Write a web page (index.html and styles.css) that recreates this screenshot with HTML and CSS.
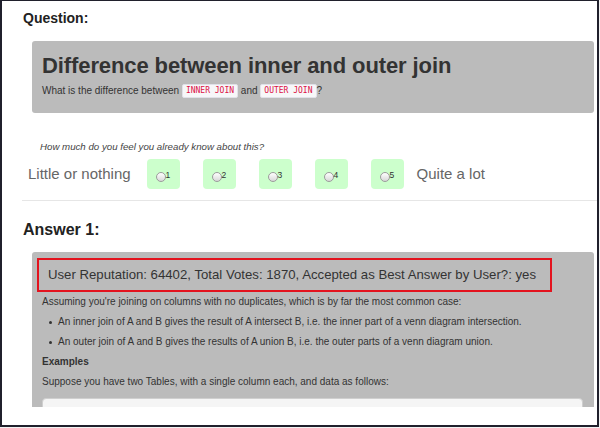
FILE: index.html
```html
<!DOCTYPE html>
<html>
<head>
<meta charset="utf-8">
<link rel="stylesheet" href="styles.css">
</head>
<body>
<div class="frame">
  <div class="content">
    <h3 class="q-label">Question:</h3>
    <div class="well question">
      <h1 class="title">Difference between inner and outer join</h1>
      <p class="sub">What is the difference between <code>INNER JOIN</code> and <code>OUTER JOIN</code>?</p>
    </div>
    <p class="prompt">How much do you feel you already know about this?</p>
    <div class="scale">
      <span class="end end-left">Little or nothing</span>
      <label class="opt"><span class="radio"></span><span class="num">1</span></label>
      <label class="opt"><span class="radio"></span><span class="num">2</span></label>
      <label class="opt"><span class="radio"></span><span class="num">3</span></label>
      <label class="opt"><span class="radio"></span><span class="num">4</span></label>
      <label class="opt"><span class="radio"></span><span class="num">5</span></label>
      <span class="end end-right">Quite a lot</span>
    </div>
    <hr class="rule">
    <h2 class="a-label">Answer 1:</h2>
    <div class="well answer">
      <div class="meta">User Reputation: 64402, Total Votes: 1870, Accepted as Best Answer by User?: yes</div>
      <p class="txt">Assuming you're joining on columns with no duplicates, which is by far the most common case:</p>
      <ul class="list">
        <li>An inner join of A and B gives the result of A intersect B, i.e. the inner part of a venn diagram intersection.</li>
        <li>An outer join of A and B gives the results of A union B, i.e. the outer parts of a venn diagram union.</li>
      </ul>
      <p class="txt bold">Examples</p>
      <p class="txt">Suppose you have two Tables, with a single column each, and data as follows:</p>
      <pre class="pre"> </pre>
    </div>
  </div>
</div>
</body>
</html>
```

FILE: styles.css
```css
html, body {
  margin: 0;
  padding: 0;
  background: #f2f2f2;
}
body {
  font-family: "Liberation Sans", Arial, Helvetica, sans-serif;
  color: #333;
}
.frame {
  width: 599px;
  height: 427px;
  box-sizing: border-box;
  border-style: solid;
  border-color: #20202c;
  border-width: 1px 2px 2px 2px;
  background: #fff;
}
.content {
  height: 406px;
  overflow: hidden;
  padding-left: 20px;
}
.q-label {
  margin: 9px 0 0 1px;
  font-size: 14px;
  line-height: 16px;
  font-weight: bold;
  color: #222;
}
.well {
  background: #bbbbbb;
  border-radius: 3px;
  margin-left: 10px;
  margin-right: 3px;
}
.question {
  margin-top: 15px;
  height: 72px;
  box-sizing: border-box;
  padding: 12px 10px 0 10px;
}
.title {
  margin: 0;
  font-size: 22px;
  line-height: 26px;
  font-weight: bold;
  color: #333;
  letter-spacing: -0.1px;
}
.sub {
  margin: 4px 0 0 0;
  font-size: 10px;
  line-height: 16px;
  color: #333;
}
.sub code {
  font-family: "DejaVu Sans Mono", "Liberation Mono", monospace;
  font-size: 8px;
  line-height: 10px;
  color: #dd1144;
  background: #f7f7f9;
  border: 1px solid #e1e1e8;
  border-radius: 2px;
  padding: 1px 3px;
  display: inline-block;
  vertical-align: 1px;
}
.prompt {
  margin: 27px 0 0 18px;
  font-size: 9.7px;
  line-height: 14px;
  font-style: italic;
  color: #444;
}
.scale {
  display: flex;
  align-items: center;
  margin: 5px 0 0 6px;
  height: 30px;
}
.end {
  font-size: 15px;
  line-height: 18px;
  color: #666;
}
.end-left {
  margin-right: 16px;
}
.end-right {
  margin-left: 13px;
}
.opt {
  width: 33px;
  height: 30px;
  box-sizing: border-box;
  background: #ccffcc;
  border-radius: 4px;
  padding: 12px 0 0 9px;
  display: flex;
  align-items: flex-start;
  margin-right: 23px;
}
.opt:last-of-type {
  margin-right: 0;
}
.radio {
  width: 10px;
  height: 10px;
  box-sizing: border-box;
  border-radius: 50%;
  border: 1px solid #9c9c9c;
  background: linear-gradient(#ffffff, #d8d8d8);
  margin-top: 1px;
}
.num {
  font-size: 8.5px;
  line-height: 8px;
  color: #333;
  margin-left: 0;
}
.rule {
  border: 0;
  border-top: 1px solid #e6e6e6;
  margin: 11px 0 0 0;
  height: 0;
}
.a-label {
  margin: 19px 0 0 1px;
  font-size: 16px;
  line-height: 20px;
  font-weight: bold;
  color: #222;
}
.answer {
  margin-top: 12px;
  padding: 6px 11px 20px 5px;
}
.meta {
  display: table;
  border: 2px solid #e3131e;
  padding: 0 14px 0 9px;
  font-size: 13.2px;
  line-height: 30px;
  color: #333;
}
.txt {
  margin: 0 0 0 5px;
  font-size: 10px;
  line-height: 20px;
  color: #333;
}
.bold {
  font-weight: bold;
}
.list {
  margin: 0 0 0 5px;
  padding-left: 16px;
  font-size: 10px;
  line-height: 20px;
}
.list li {
  list-style: none;
  position: relative;
}
.list li::before {
  content: "";
  position: absolute;
  left: -9px;
  top: 9px;
  width: 3px;
  height: 3px;
  border-radius: 50%;
  background: #333;
}
.pre {
  margin: 6px 0 0 5px;
  height: 30px;
  background: #f5f5f5;
  border: 1px solid #cfcfcf;
  border-radius: 4px;
}
```
